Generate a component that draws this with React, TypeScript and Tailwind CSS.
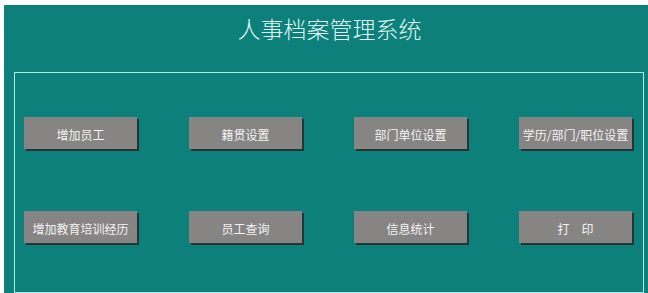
const BUTTONS = [
  "增加员工",
  "籍贯设置",
  "部门单位设置",
  "学历/部门/职位设置",
  "增加教育培训经历",
  "员工查询",
  "信息统计",
  "打　印",
];

export default function App() {
  return (
    <div className="w-[648px] h-[293px] overflow-hidden bg-white pt-[5px] pl-[4px] flex">
      <div className="flex-1 bg-[#0e807c] flex flex-col">
        {/* Title */}
        <div className="pt-[12px] pl-[7px] text-center">
          <h1
            className="text-[23px] leading-[23px] text-[#dff6f3] tracking-[0px]"
            style={{ fontFamily: '"Noto Sans CJK SC", sans-serif', fontWeight: 300 }}
          >
            人事档案管理系统
          </h1>
        </div>

        {/* Menu panel */}
        <div className="mt-[32px] ml-[10px] mr-[4px] h-[400px] border border-[#a6efe6] pt-[44px] pl-[9px]">
          <div className="grid grid-cols-[repeat(4,113px)] gap-x-[52px] gap-y-[62px]">
            {BUTTONS.map((label) => (
              <button
                key={label}
                type="button"
                className="h-[32px] bg-[#878484] shadow-[2px_2px_0_#263534] flex items-center justify-center pt-[3px] text-[12px] leading-none text-[#f4f4f4] whitespace-nowrap"
                style={{ fontFamily: '"Noto Sans CJK SC", sans-serif' }}
              >
                {label}
              </button>
            ))}
          </div>
        </div>
      </div>
    </div>
  );
}
